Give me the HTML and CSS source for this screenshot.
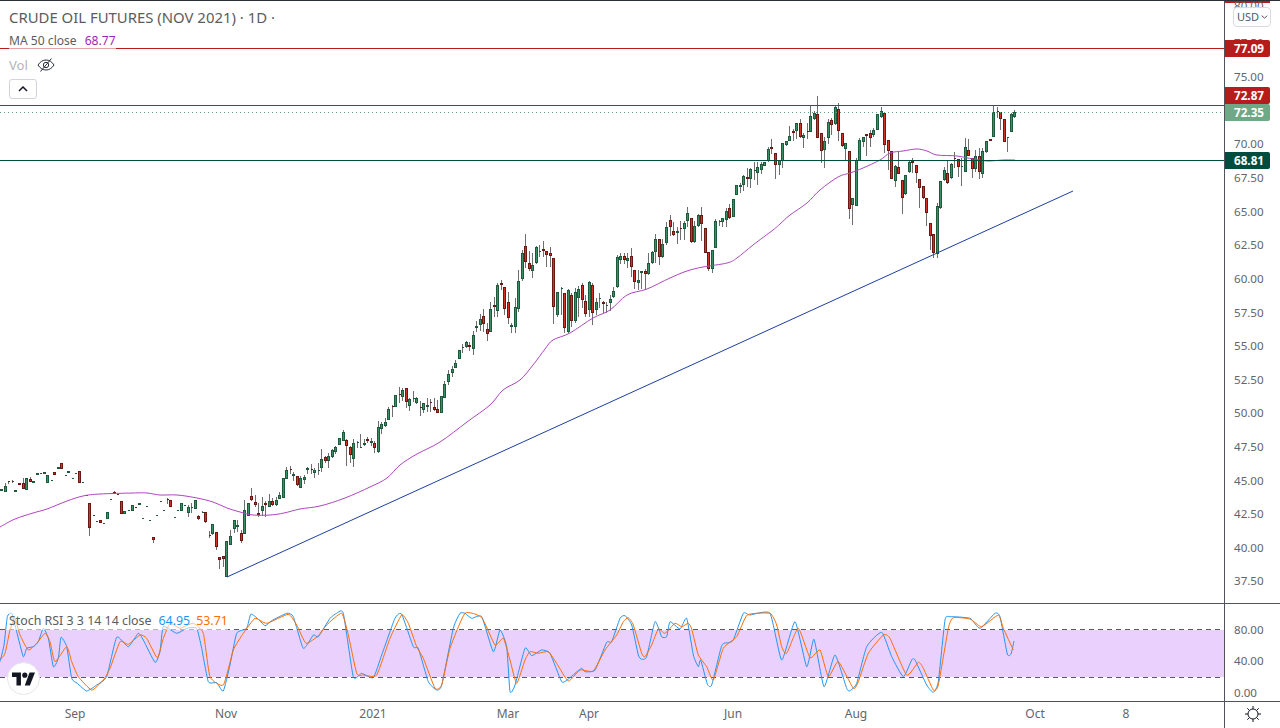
FILE: index.html
```html
<!DOCTYPE html>
<html lang="en">
<head>
<meta charset="utf-8">
<title>Crude Oil Futures (Nov 2021)</title>
<link rel="stylesheet" href="styles.css">
</head>
<body>
<main class="layout">
  <section class="pane pane-main">
    <svg class="plot" id="mainPlot" viewBox="0 1 1224 602" width="1224" height="602">
      <g id="wicks"></g>
      <g id="bodies"></g>
      <path id="ma" class="ma-line" d=""></path>
      <line class="trend" x1="227" y1="577" x2="1073" y2="191"></line>
      <line class="hline red" x1="0" y1="48.5" x2="1224" y2="48.5"></line>
      <line class="hline red" x1="0" y1="105.5" x2="1224" y2="105.5"></line>
      <line class="hline last" x1="0" y1="112.5" x2="1224" y2="112.5"></line>
      <line class="hline teal" x1="0" y1="160.5" x2="1224" y2="160.5"></line>
    </svg>
    <div class="legend">
      <div class="legend-title"><span>CRUDE OIL FUTURES (NOV 2021) · 1D ·</span></div>
      <div class="legend-ma"><span>MA 50 close</span><span class="ma-value">68.77</span></div>
      <div class="legend-vol">
        <span>Vol</span>
        <svg class="eye" viewBox="0 0 18 14" width="18" height="14">
          <path d="M1 7c2.2-3.4 4.9-5 8-5s5.800 1.600 8 5c-2.200 3.400-4.900 5-8 5s-5.800-1.600-8-5z"></path>
          <circle cx="9" cy="7" r="2.700"></circle>
          <path d="M3.500 13.500 14.500.5"></path>
        </svg>
      </div>
      <button class="collapse" type="button" aria-label="Collapse">
        <svg viewBox="0 0 10 6" width="10" height="6"><path d="M1 5l4-4 4 4"></path></svg>
      </button>
    </div>
  </section>

  <aside class="axis axis-main">
    <svg viewBox="1225 1 55 602" width="55" height="602">
      <rect class="badge-red" x="1225" y="1" width="45" height="2"></rect>
      <g class="ticks">
        <text x="1234" y="10">80.00</text>
        <text x="1234" y="46.500">77.50</text>
        <text x="1234" y="80.500">75.00</text>
        <text x="1234" y="147.500">70.00</text>
        <text x="1234" y="181.500">67.50</text>
        <text x="1234" y="215.500">65.00</text>
        <text x="1234" y="248.500">62.50</text>
        <text x="1234" y="282.500">60.00</text>
        <text x="1234" y="316.500">57.50</text>
        <text x="1234" y="349.500">55.00</text>
        <text x="1234" y="383.500">52.50</text>
        <text x="1234" y="416.500">50.00</text>
        <text x="1234" y="450.500">47.50</text>
        <text x="1234" y="484.500">45.00</text>
        <text x="1234" y="517.500">42.50</text>
        <text x="1234" y="551.500">40.00</text>
        <text x="1234" y="584.500">37.50</text>
      </g>
      <path class="badge-red" d="M1225 40h43a2 2 0 0 1 2 2v13a2 2 0 0 1-2 2h-43z"></path>
      <path class="badge-red" d="M1225 87h43a2 2 0 0 1 2 2v13a2 2 0 0 1-2 2h-43z"></path>
      <path class="badge-sage" d="M1225 104h43a2 2 0 0 1 2 2v13a2 2 0 0 1-2 2h-43z"></path>
      <path class="badge-teal" d="M1225 152h43a2 2 0 0 1 2 2v13a2 2 0 0 1-2 2h-43z"></path>
      <g class="badge-text">
        <text x="1234" y="53">77.09</text>
        <text x="1234" y="100">72.87</text>
        <text x="1234" y="117">72.35</text>
        <text x="1234" y="165">68.81</text>
      </g>
    </svg>
    <button class="currency" type="button">USD<svg viewBox="0 0 7 4" width="7" height="4"><path d="M.7.7l2.800 2.400L6.300.7"></path></svg></button>
  </aside>

  <section class="pane pane-stoch">
    <svg class="plot" viewBox="0 604 1224 97" width="1224" height="97">
      <rect class="band" x="0" y="630" width="1224" height="47"></rect>
      <line class="dash" x1="0" y1="629.500" x2="1224" y2="629.500"></line>
      <line class="dash" x1="0" y1="677.500" x2="1224" y2="677.500"></line>
      <path id="stochK" class="stoch-k" d=""></path>
      <path id="stochD" class="stoch-d" d=""></path>
    </svg>
    <div class="legend-stoch">
      <span>Stoch RSI 3 3 14 14 close</span>
      <span class="k-value">64.95</span>
      <span class="d-value">53.71</span>
    </div>
    <div class="brand">
      <svg viewBox="0 0 36 28" width="23" height="18">
        <path d="M14 24H7V11H0V4h14z"></path>
        <circle cx="20" cy="8" r="4"></circle>
        <path d="M28 24h-8l7.500-20H36z"></path>
      </svg>
    </div>
  </section>

  <aside class="axis axis-stoch">
    <svg viewBox="1225 604 55 97" width="55" height="97">
      <g class="ticks">
        <text x="1234" y="633.500">80.00</text>
        <text x="1234" y="664.500">40.00</text>
        <text x="1234" y="696.500">0.00</text>
      </g>
    </svg>
  </aside>

  <footer class="timeline">
    <svg viewBox="0 702 1224 26" width="1224" height="26">
      <g class="months">
        <text x="75" y="718">Sep</text>
        <text x="226" y="718">Nov</text>
        <text x="373" y="718">2021</text>
        <text x="508" y="718">Mar</text>
        <text x="589" y="718">Apr</text>
        <text x="733" y="718">Jun</text>
        <text x="856" y="718">Aug</text>
        <text x="1035" y="718">Oct</text>
        <text x="1126" y="718">8</text>
      </g>
    </svg>
  </footer>

  <aside class="corner">
    <svg class="gear" viewBox="0 0 16 16" width="16" height="16">
      <circle cx="8" cy="8" r="5"></circle>
      <path d="M8 0v3M8 13v3M0 8h3M13 8h3M2.300 2.300l2.100 2.100M11.600 11.600l2.100 2.100M2.300 13.700l2.100-2.100M11.600 4.400l2.100-2.100"></path>
    </svg>
  </aside>
</main>
<script src="chart.js"></script>
</body>
</html>
```

FILE: styles.css
```css
* { box-sizing: border-box; }

html, body {
  margin: 0;
  height: 100%;
  background: #fff;
  overflow: hidden;
}

body {
  font-family: "Noto Sans", "Liberation Sans", sans-serif;
  color: #555;
}

.layout {
  display: grid;
  grid-template-columns: 1225px 55px;
  grid-template-rows: 603px 98px 26px;
  height: 728px;
  border-top: 1px solid #2a2e39;
}

.pane {
  position: relative;
  border-right: 1px solid #50535e;
  border-bottom: 1px solid #50535e;
  overflow: hidden;
}

.plot { display: block; }

.axis {
  position: relative;
  border-bottom: 1px solid #50535e;
  overflow: hidden;
}

.axis svg, .timeline svg { display: block; }

.ticks text, .months text {
  font-size: 11.600px;
  fill: #62656c;
}

.months text { text-anchor: middle; font-size: 12px; }

.badge-red { fill: #b71c1c; }
.badge-sage { fill: #70a886; }
.badge-teal { fill: #004d40; }

.badge-text text {
  font-size: 11.700px;
  font-weight: 700;
  fill: #fff;
}

.wick { fill: none; stroke: #6e6e6e; stroke-width: 1; shape-rendering: crispEdges; }
.body-green { fill: #3c8f64; stroke: #1b5a3b; stroke-width: 1; shape-rendering: crispEdges; }
.body-red { fill: #cf3428; stroke: #6e1712; stroke-width: 1; shape-rendering: crispEdges; }

.ma-line { fill: none; stroke: #ab47bc; stroke-width: 1; stroke-linejoin: round; }
.trend { stroke: #1d3f9e; stroke-width: 1; }

.hline { stroke-width: 1; shape-rendering: crispEdges; }
.hline.red { stroke: #b71c1c; }
.hline.teal { stroke: #004d40; stroke-width: 1.200; }
.hline.last { stroke: #5fa07e; stroke-dasharray: 1 3; }

.band { fill: #e9d0fd; }
.dash { stroke: #5a5a5f; stroke-width: 1; stroke-dasharray: 5 4; shape-rendering: crispEdges; }
.stoch-k, .stoch-d { fill: none; stroke-width: 1; stroke-linejoin: round; }
.stoch-k { stroke: #2196f3; }
.stoch-d { stroke: #ff6d00; }

.legend {
  position: absolute;
  top: 0;
  left: 9px;
  display: flex;
  flex-direction: column;
  align-items: flex-start;
}

.legend-title {
  margin-top: 5px;
  height: 22px;
  line-height: 22px;
  font-size: 14.900px;
  color: #5c5c5c;
}

.legend-ma {
  display: flex;
  gap: 8px;
  margin-top: 3px;
  height: 20px;
  line-height: 20px;
  font-size: 12.100px;
  color: #5c5c5c;
  background: rgba(255, 255, 255, 0.6);
}

.ma-value { color: #9c27b0; }

.legend-vol {
  display: flex;
  align-items: center;
  gap: 9px;
  margin-top: 4px;
  height: 20px;
  font-size: 13px;
  color: #b2b5be;
}

.eye { fill: none; stroke: #2a2e39; stroke-width: 1; }

.collapse {
  display: flex;
  align-items: center;
  justify-content: center;
  margin-top: 4px;
  width: 28px;
  height: 20px;
  padding: 0;
  background: #fff;
  border: 1px solid #d1d4dc;
  border-radius: 3px;
}

.collapse svg { fill: none; stroke: #131722; stroke-width: 1.500; }

.currency {
  position: absolute;
  top: 6px;
  left: 8px;
  display: flex;
  align-items: center;
  gap: 2px;
  width: 38px;
  height: 20px;
  padding: 0 0 1px 3px;
  font: 11px "Noto Sans", "Liberation Sans", sans-serif;
  color: #4a5b73;
  background: #fff;
  border: 1px solid #d9dbe3;
  border-radius: 4px;
}

.currency svg { flex: none; fill: none; stroke: #50535e; stroke-width: 1; }

.legend-stoch {
  position: absolute;
  top: 8px;
  left: 9px;
  display: flex;
  gap: 7px;
  height: 18px;
  line-height: 18px;
  font-size: 12.400px;
  color: #5c5c5c;
  background: rgba(255, 255, 255, 0.55);
}

.k-value { color: #2196f3; }
.d-value { color: #ff6d00; margin-left: -1px; }

.brand {
  position: absolute;
  left: 7px;
  top: 58px;
  display: flex;
  align-items: center;
  justify-content: center;
  width: 33px;
  height: 33px;
  background: #fff;
  border: 1px solid #e6e6ea;
  border-radius: 50%;
}

.brand svg { fill: #131722; }

.timeline {
  border-right: 1px solid #50535e;
}

.corner {
  display: flex;
  justify-content: center;
  padding: 4px 0 0 0;
}

.gear { fill: none; stroke: #131722; stroke-width: 1; }
```

FILE: chart.js
```js
// Candle rows: colour + pixel x, body top, body bottom, wick top, wick bottom.
var CANDLES = "g1 489 491,g5 486 492 483 492,r8 481 482 481 484,g12 481 482 480 483,g15 490 492,r19 483 485,r23 483 489 478 489,g26 478 490,r30 479 482 477 482,g33 481 483,g37 473 475,g40 473 474,g44 472 474 472 474,g47 475 483,g51 480 481,r54 472 475,g58 467 469,r61 463 469,g65 475 476,g68 471 473,g72 478 479,g75 473 474,r79 471 483,g82 482 483,g86 495 496,r89 503 528 503 536,g93 515 516,g96 521 522,r100 520 523,g103 523 524,g107 512 519,g110 499 500,r114 492 494 491 494,r117 494 495,r121 501 514,g124 511 514,g128 510 511,g132 505 511,r135 507 508,g139 503 505,g142 518 519,g146 506 507,g149 520 521,r153 537 540 537 543,g156 515 516,g160 501 502,g163 510 511,r167 499 500 498 504,r170 500 507,g174 517 518,g177 510 511,g181 503 511,g184 505 506,g188 507 513 505 517,g191 507 508 503 513,g195 500 509,r198 516 519 515 520,g202 512 513 511 513,r205 512 522 512 523,r209 535 536 531 538,g212 524 534 524 535,r216 532 547 532 550,r219 557 560 557 569,r223 556 559 556 567,g226 541 577,g230 536 545 530 545,g234 520 529 520 533,g237 525 527 520 532,r241 533 541 530 543,g244 510 534 500 534,g248 503 516,r251 496 500 488 501,r255 502 505 495 507,r258 513 515 503 517,g262 506 511 497 516,r265 503 505 501 517,g269 501 507 494 507,r272 501 505 498 506,g276 500 505 497 506,g279 495 499 492 499,g283 478 498,g286 470 479 467 479,r290 469 470 466 474,g293 474 476 472 481,r297 476 485 476 486,g300 478 488 476 488,g304 477 480 475 484,g307 468 470 467 474,r311 469 470 464 474,g314 470 473 468 478,g318 470 471 463 475,g321 459 468 449 472,r325 457 461 456 463,g328 456 461 453 468,g332 450 457 449 458,g335 447 452 446 454,g339 438 445,g343 432 441 430 441,r346 440 446 439 466,r350 447 455 446 463,g353 443 459 439 467,g357 442 443 441 448,g360 447 448 434 448,g364 443 445 439 446,r367 439 441 437 443,g371 441 443 438 446,r374 443 448 441 453,g378 427 452 421 453,g381 424 429 422 434,g385 422 426 418 427,g388 409 420 407 420,r392 406 407 405 417,g395 395 407,r399 394 395 387 403,g402 390 397 388 401,r406 388 402 388 408,g409 399 406 398 411,g413 398 399 391 402,g416 398 403 397 404,r420 407 408 401 416,g423 403 410 403 413,g427 405 407 398 412,r430 402 403 399 412,r434 407 410 398 411,r437 409 413 400 413,g441 396 413,g444 384 398 381 398,g448 374 382 370 385,g452 369 373 366 377,g455 363 368 360 368,g459 350 359,g462 347 348 344 353,g466 342 347 341 348,r469 345 347 342 351,g473 335 349 331 355,g476 326 328 321 332,g480 319 325 314 331,r483 316 324 309 332,r487 329 334 323 341,g490 309 332 302 332,r494 305 307 297 317,g497 285 311 283 317,r501 283 285 280 290,r504 287 309 287 315,r508 302 318 292 324,g511 325 327 323 333,g515 307 327 298 333,g518 281 309 270 312,g522 253 279 250 281,r525 246 262 234 268,r529 263 269 251 271,g532 265 271 253 278,g536 247 263 246 264,g539 251 252 245 257,r543 249 251 241 257,r546 251 255 251 267,r550 253 256 247 267,r553 258 307 258 324,g557 292 315 292 317,g561 288 289 287 315,r564 293 328 293 333,g568 290 332 289 333,r571 295 321 293 327,g575 292 321 288 323,g578 289 298 286 317,r582 285 300 283 308,r585 301 314 295 317,g589 282 310 281 317,r592 285 313 283 325,g596 302 310 298 315,g599 298 299 293 308,r603 302 304 301 313,g606 305 306 302 313,g610 299 303 295 311,g613 291 297 287 298,g617 257 287 255 288,g620 256 260 253 264,r624 256 260 253 264,g627 258 261 253 268,r631 256 267 248 277,r634 270 282 270 289,g638 280 283 270 290,g641 271 273 271 289,r645 271 274 269 289,g648 263 274 253 275,g652 252 263 251 264,g655 239 252 234 263,r659 239 257 239 265,g662 244 257 239 258,g666 227 243 222 245,r670 220 227 215 236,r673 231 235 222 236,g677 231 233 227 244,r680 228 229 221 240,g684 223 229 221 240,g687 213 221 207 227,r691 218 242 218 243,g694 226 242 221 243,g698 215 226 214 227,r701 215 224 207 241,r705 228 253 228 253,r708 252 269 252 271,g712 250 269 250 273,g715 221 248 219 248,g719 221 222 220 226,g722 218 222 218 227,g726 211 220 208 227,r729 208 218 204 219,g733 199 217,g736 185 195,g740 185 187 183 193,g743 176 185 175 191,r747 177 179 168 187,g750 169 179 168 188,g754 170 171 162 180,g757 167 173 162 185,g761 164 170 162 174,g764 162 166,g768 149 161 147 162,r771 147 149 139 154,r775 153 165 153 179,g779 160 165 160 175,g782 143 161 143 168,g786 141 145 141 146,g789 136 141 126 141,r793 131 133 129 141,g796 123 131 123 139,r800 123 137 119 138,g803 135 138 133 148,r807 131 132 123 139,g810 116 132 105 132,g814 113 119 111 120,r817 114 138 96 138,r821 133 151 133 163,g824 141 150 137 168,g828 122 138 119 144,r831 120 125 118 135,g835 107 124 105 125,r838 109 131 103 141,r842 133 146 133 147,g845 143 149 143 161,r849 151 209 151 219,g852 198 205 198 225,g856 160 206 158 206,g859 140 161 138 161,g863 137 142 137 147,r866 134 136 134 156,r870 133 138 130 147,g873 130 135 128 137,g877 114 130,g881 111 117 107 118,r884 113 145 113 153,r888 140 151 140 170,r891 151 179,g895 166 181 165 187,r898 167 174 151 174,r902 180 198 180 214,g905 175 194 175 195,g909 162 172 160 173,r912 161 163 158 173,r916 165 173 165 183,r919 179 188 179 208,r923 186 198 186 199,r926 198 213 198 226,r930 223 236 223 250,r933 234 253 234 258,g937 206 254 203 258,g940 181 208 181 209,g944 170 180 167 181,r947 173 183 160 184,g951 164 178 163 179,r954 158 159 152 168,r958 159 167 159 177,g961 166 167 158 186,g965 147 172 138 172,r968 150 156 139 156,r972 158 169 158 178,g975 156 169 150 172,r979 156 172 148 179,g982 151 174 148 178,g986 141 152 141 153,r990 139 141,g993 112 137 105 137,r997 111 112 107 118,r1000 112 119 112 130,r1004 119 142,g1007 137 138 137 152,g1011 114 132 113 132,g1014 112 117 110 118";

var MA = [[0,527],[15,519],[33,513],[47,509],[67,501],[83,496],[100,494],[133,493],[147,493],[160,495],[177,495],[197,498],[213,502],[227,508],[240,512],[253,515],[270,515],[284,513],[300,509],[320,506],[345,498],[370,487],[387,478],[400,465],[417,454],[440,442],[467,422],[490,405],[503,390],[520,380],[533,365],[545,349],[553,340],[570,333],[593,318],[610,310],[627,295],[647,289],[670,278],[687,271],[703,267],[727,263],[737,258],[753,245],[773,230],[780,224],[790,215],[807,203],[820,190],[838,177],[850,173],[863,168],[880,160],[890,153],[903,151],[917,149],[927,151],[937,155],[957,156],[973,159],[987,161],[1003,160],[1015,160]];

// Stochastic traces, traced from two crops: crop x origin, crop points at 3x.
var K_A = [[0,170],[12,120],[22,35],[35,25],[50,80],[70,155],[80,130],[100,125],[115,110],[130,70],[145,100],[160,185],[175,160],[183,97],[200,125],[215,220],[232,235],[260,258],[290,240],[320,215],[350,97],[385,125],[415,85],[430,105],[465,172],[480,140],[490,65],[530,85],[560,70],[590,70],[605,130],[625,230],[650,233],[670,258],[690,180],[710,85],[740,70],[752,28],[770,38],[795,62],[815,47],[860,25],[880,35],[910,130],[940,90],[955,95],[990,40],[1010,25],[1030,25],[1060,215],[1085,205],[1120,218],[1145,150],[1185,40],[1205,28],[1240,125],[1255,130],[1285,230],[1310,255],[1325,240],[1360,70],[1380,25],[1395,25],[1415,40],[1445,35],[1480,140],[1500,75],[1520,125]];
var K_B = [[0,260],[15,240],[45,130],[65,152],[95,135],[120,145],[155,230],[175,222],[195,205],[215,190],[225,200],[255,195],[290,112],[305,110],[330,40],[345,32],[365,60],[385,150],[395,163],[410,155],[435,50],[455,95],[470,95],[480,50],[510,72],[530,40],[550,150],[565,185],[572,165],[592,237],[605,240],[635,122],[655,113],[670,105],[700,25],[720,30],[780,25],[815,165],[855,50],[890,185],[912,103],[942,245],[975,150],[1010,250],[1020,257],[1040,235],[1070,125],[1115,82],[1145,155],[1180,215],[1205,165],[1215,165],[1250,240],[1270,262],[1285,230],[1305,45],[1320,35],[1380,40],[1410,70],[1455,25],[1470,35],[1492,147],[1503,147],[1512,108]];
var D_A = [[0,165],[15,145],[30,75],[45,40],[60,90],[85,135],[110,115],[135,85],[150,110],[165,170],[200,125],[215,170],[235,215],[275,255],[310,225],[330,190],[360,110],[385,118],[420,90],[440,100],[472,158],[490,100],[510,55],[540,70],[580,55],[610,85],[630,215],[670,240],[700,135],[730,85],[765,40],[800,55],[865,28],[890,60],[918,115],[955,92],[980,60],[1025,25],[1045,90],[1070,205],[1090,210],[1130,210],[1170,100],[1205,30],[1225,55],[1250,125],[1270,160],[1305,250],[1325,240],[1350,130],[1395,25],[1445,38],[1485,120],[1510,100]];
var D_B = [[0,165],[20,235],[45,165],[60,140],[85,145],[115,140],[140,175],[175,228],[210,195],[250,198],[285,135],[320,90],[340,50],[355,38],[370,60],[395,145],[405,155],[425,120],[445,72],[465,85],[495,55],[515,65],[535,55],[545,72],[565,150],[590,185],[610,225],[640,130],[680,95],[712,30],[780,25],[800,60],[815,125],[830,145],[865,70],[900,158],[930,135],[955,215],[985,170],[1030,250],[1045,230],[1075,145],[1120,90],[1140,100],[1190,210],[1225,172],[1240,190],[1270,255],[1285,240],[1315,70],[1330,38],[1380,42],[1415,65],[1465,30],[1480,70],[1510,135]];

var SVG_NS = "http://www.w3.org/2000/svg";

function addPath(parent, cls, d) {
  var el = document.createElementNS(SVG_NS, "path");
  el.setAttribute("class", cls);
  el.setAttribute("d", d);
  parent.appendChild(el);
}

function drawCandles() {
  var wicks = "", green = "", red = "";
  CANDLES.split(",").forEach(function (row) {
    var parts = row.split(" ");
    var type = parts[0].charAt(0);
    var x = +parts[0].slice(1);
    var top = +parts[1], bottom = +parts[2];
    var wickTop = parts[3] ? +parts[3] : top;
    var wickBottom = parts[4] ? +parts[4] : bottom;
    wicks += "M" + (x + 0.5) + " " + wickTop + "V" + wickBottom;
    var height = Math.max(bottom - top - 1, 0);
    var body = "M" + (x - 0.5) + " " + (top + 0.5) + "h2v" + height + "h-2z";
    if (type === "g") { green += body; } else { red += body; }
  });
  addPath(document.getElementById("wicks"), "wick", wicks);
  var bodies = document.getElementById("bodies");
  addPath(bodies, "body-green", green);
  addPath(bodies, "body-red", red);
}

function cropPoints(points, originX) {
  return points.map(function (p) {
    return [originX + p[0] / 3, 605 + p[1] / 3];
  });
}

// Catmull-Rom through the traced points; "k" is the tangent divisor, larger is tighter.
function smoothPath(pts, k) {
  var d = "M" + pts[0][0].toFixed(1) + " " + pts[0][1].toFixed(1);
  for (var i = 0; i < pts.length - 1; i++) {
    var p0 = pts[Math.max(i - 1, 0)], p1 = pts[i], p2 = pts[i + 1];
    var p3 = pts[Math.min(i + 2, pts.length - 1)];
    var c1x = p1[0] + (p2[0] - p0[0]) / k, c1y = p1[1] + (p2[1] - p0[1]) / k;
    var c2x = p2[0] - (p3[0] - p1[0]) / k, c2y = p2[1] - (p3[1] - p1[1]) / k;
    d += "C" + [c1x, c1y, c2x, c2y, p2[0], p2[1]].map(function (n) { return n.toFixed(1); }).join(" ");
  }
  return d;
}

function drawLines() {
  document.getElementById("ma").setAttribute("d", smoothPath(MA, 6));
  document.getElementById("stochK").setAttribute("d", smoothPath(cropPoints(K_A, 0).concat(cropPoints(K_B, 510)), 12));
  document.getElementById("stochD").setAttribute("d", smoothPath(cropPoints(D_A, 0).concat(cropPoints(D_B, 510)), 12));
}

drawCandles();
drawLines();
```
